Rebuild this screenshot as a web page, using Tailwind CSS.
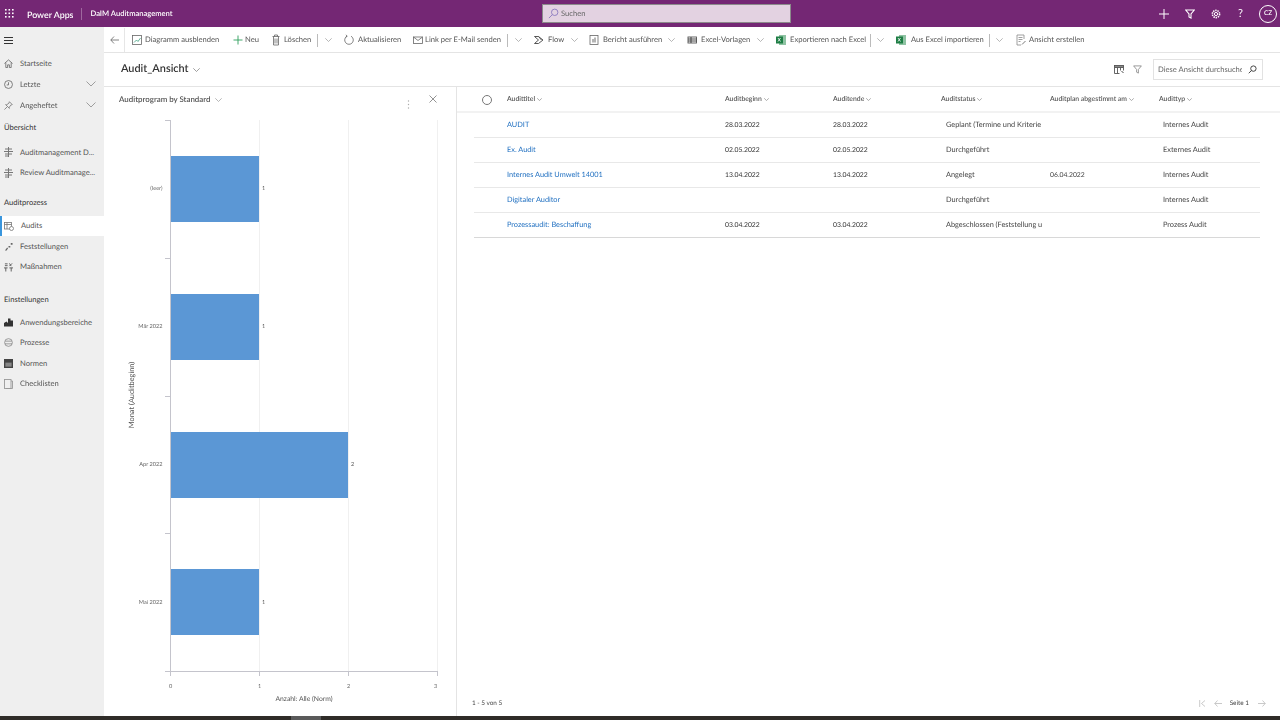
<!DOCTYPE html>
<html lang="de">
<head>
<meta charset="utf-8">
<title>Power Apps</title>
<script src="https://cdn.jsdelivr.net/npm/@tailwindcss/browser@4"></script>
</head>
<body class="m-0 overflow-hidden bg-white">
<div class="w-[1280px] h-[720px] flex flex-col overflow-hidden font-['Lato',sans-serif] [text-rendering:geometricPrecision] text-[7.600px] text-[#444] blur-[0.3px]">

<!-- top bar -->
<header class="h-[27px] shrink-0 bg-[#742774] text-white relative flex items-center">
  <svg class="shrink-0 ml-[5px] w-[9px] h-[9px]" viewBox="0 0 9 9" fill="#fff"><rect x="0" y="0" width="1.6" height="1.6"/><rect x="3.5" y="0" width="1.6" height="1.6"/><rect x="7" y="0" width="1.6" height="1.6"/><rect x="0" y="3.5" width="1.6" height="1.6"/><rect x="3.5" y="3.5" width="1.6" height="1.6"/><rect x="7" y="3.5" width="1.6" height="1.6"/><rect x="0" y="7" width="1.6" height="1.6"/><rect x="3.5" y="7" width="1.6" height="1.6"/><rect x="7" y="7" width="1.6" height="1.6"/></svg>
  <span class="ml-[13px] mt-[2px] text-[8.800px] font-semibold whitespace-nowrap">Power Apps</span>
  <span class="ml-[8px] w-px h-[12px] bg-white/30"></span>
  <span class="ml-[8px] mt-px text-[7.600px] font-semibold whitespace-nowrap w-[440px]">DaIM Auditmanagement</span>
  <div class="absolute left-[542px] top-[4px] w-[249px] h-[19px] bg-[#e3d2e1] border border-[#8b8b8b] flex items-center pl-[5px] gap-[2px] text-[#666]">
    <svg class="shrink-0 w-[11px] h-[11px]" viewBox="0 0 12 12" fill="none" stroke="#8c7bc0" stroke-width="1"><circle cx="7.3" cy="4.7" r="3.5"/><path d="M4.8 7.2 1 11"/></svg>
    <span class="mt-px">Suchen</span>
  </div>
  <div class="ml-auto flex items-center text-white">
    <svg class="shrink-0 w-[10px] h-[10px] mr-[16px]" viewBox="0 0 10 10" stroke="#fff" stroke-width="1"><path d="M5 0v10M0 5h10"/></svg>
    <svg class="shrink-0 w-[10px] h-[10px] mr-[16px]" viewBox="0 0 10 10" fill="none" stroke="#fff" stroke-width="1.1"><path d="M.7 1h8.6L6 5v4L4 8V5z"/></svg>
    <svg class="shrink-0 w-[10px] h-[10px] mr-[16px]" viewBox="0 0 10 10" fill="none" stroke="#fff" stroke-width="1"><circle cx="5" cy="5" r="1.6"/><circle cx="5" cy="5" r="3.6" stroke-width="1.6" stroke-dasharray="1.4 .85"/></svg>
    <span class="text-[11px] leading-none mr-[15px] w-[7px] text-center">?</span>
    <span class="w-[18px] h-[18px] mr-[3px] rounded-full border border-white flex items-center justify-center text-[6.5px] font-semibold">CZ</span>
  </div>
</header>

<div class="flex flex-1 min-h-0">
  <!-- sidebar -->
  <nav class="w-[104px] shrink-0 bg-[#efefef] flex flex-col text-[7.600px] text-[#555]">
    <div class="h-[26px] flex items-center pl-[4px]">
      <svg class="shrink-0 w-[9px] h-[7px]" viewBox="0 0 9 7" stroke="#333" stroke-width="1"><path d="M0 .5h9M0 3.500h9M0 6.500h9"/></svg>
    </div>
    <div class="h-[21px] flex items-center pl-[4px] gap-[7px]">
      <svg class="w-[9px] h-[9px] shrink-0" viewBox="0 0 10 10" fill="none" stroke="#666" stroke-width=".9"><path d="M.5 5 5 1l4.500 4M2 4v5.500h2V6.500h2v3h2V4"/></svg><span>Startseite</span>
    </div>
    <div class="h-[21px] flex items-center pl-[4px] gap-[7px] relative">
      <svg class="w-[9px] h-[9px] shrink-0" viewBox="0 0 10 10" fill="none" stroke="#666" stroke-width=".9"><circle cx="5" cy="5" r="4.400"/><path d="M5 2.500V5.500H3"/></svg><span>Letzte</span>
      <svg class="absolute left-[86px] top-[7px] w-[10px] h-[6px]" viewBox="0 0 10 6" fill="none" stroke="#888" stroke-width=".8"><path d="M.5.500 5 5 9.500.5"/></svg>
    </div>
    <div class="h-[21px] flex items-center pl-[4px] gap-[7px] relative">
      <svg class="w-[9px] h-[9px] shrink-0" viewBox="0 0 10 10" fill="none" stroke="#777" stroke-width=".9"><path d="M6 .8 9.200 4 7.500 4.600 5.800 7 6 8.200 1.800 4 3 4.200 5.400 2.500zM3.500 6.500.5 9.500"/></svg><span>Angeheftet</span>
      <svg class="absolute left-[86px] top-[7px] w-[10px] h-[6px]" viewBox="0 0 10 6" fill="none" stroke="#888" stroke-width=".8"><path d="M.5.500 5 5 9.500.5"/></svg>
    </div>
    <div class="h-[24px] flex items-center pl-[4px] text-[#333]">Übersicht</div>
    <div class="h-[20.500px] mt-[2px] flex items-center pl-[4px] gap-[7px]">
      <svg class="w-[9px] h-[10px] shrink-0" viewBox="0 0 9 10" stroke="#777" stroke-width="1" fill="none"><path d="M4.500 0v10M1 2h7M0 4.500h9M1 7h7M1 9h3"/></svg><span class="whitespace-nowrap">Auditmanagement D...</span>
    </div>
    <div class="h-[20.500px] flex items-center pl-[4px] gap-[7px]">
      <svg class="w-[9px] h-[10px] shrink-0" viewBox="0 0 9 10" stroke="#777" stroke-width="1" fill="none"><path d="M4.500 0v10M1 2h7M0 4.500h9M1 7h7M1 9h3"/></svg><span class="whitespace-nowrap">Review Auditmanage...</span>
    </div>
    <div class="h-[24px] mt-[8px] flex items-center pl-[4px] text-[#333]">Auditprozess</div>
    <div class="h-[20.500px] mt-[.5px] bg-white border-l-2 border-[#3a96dd] flex items-center pl-[2px] gap-[7px]">
      <svg class="w-[10px] h-[10px] shrink-0" viewBox="0 0 10 10" fill="none" stroke="#777" stroke-width=".8"><rect x=".5" y="1.500" width="7" height="6.500"/><path d="M.5 3.500h7M3 1.500v6.500"/><circle cx="7.500" cy="7.500" r="2" fill="#fff"/></svg><span>Audits</span>
    </div>
    <div class="h-[20.500px] flex items-center pl-[4px] gap-[7px]">
      <svg class="w-[9px] h-[9px] shrink-0" viewBox="0 0 10 10" fill="#666"><path d="M1 9.500 3.500 6l1 1L3 9.500zM5 4.500h2V6H5zM7.500 1h2v2h-2z"/></svg><span>Feststellungen</span>
    </div>
    <div class="h-[20.500px] flex items-center pl-[4px] gap-[7px]">
      <svg class="w-[9px] h-[10px] shrink-0" viewBox="0 0 10 10" fill="none" stroke="#555" stroke-width="1"><path d="M1 1.500h3M1 3.500h3M6 1 8 4M9 1 6 4M0 6h4M2 6v4M6 6h4M8 6v4"/></svg><span>Maßnahmen</span>
    </div>
    <div class="h-[24px] mt-[10.500px] flex items-center pl-[4px] text-[#333]">Einstellungen</div>
    <div class="h-[20.500px] mt-[.5px] flex items-center pl-[4px] gap-[7px]">
      <svg class="w-[9px] h-[10px] shrink-0" viewBox="0 0 9 10" fill="#333"><path d="M0 9.500V6l2.500-1.500L4 6V1.500h2.500v2H9v6z"/></svg><span>Anwendungsbereiche</span>
    </div>
    <div class="h-[20.500px] flex items-center pl-[4px] gap-[7px]">
      <svg class="w-[9px] h-[9px] shrink-0" viewBox="0 0 10 10" fill="none" stroke="#888" stroke-width=".9"><circle cx="5" cy="5" r="4.300"/><path d="M1.500 3.500h7M1 6.500h8"/></svg><span>Prozesse</span>
    </div>
    <div class="h-[20.500px] flex items-center pl-[4px] gap-[7px]">
      <svg class="w-[9px] h-[9px] shrink-0" viewBox="0 0 10 10"><rect width="10" height="10" fill="#444"/><rect x="1.500" y="4" width="7" height="4.500" fill="#888"/></svg><span>Normen</span>
    </div>
    <div class="h-[20.500px] flex items-center pl-[4px] gap-[7px]">
      <svg class="w-[9px] h-[10px] shrink-0" viewBox="0 0 9 10" fill="none" stroke="#999" stroke-width=".9"><rect x=".5" y=".5" width="6.500" height="9"/><path d="M7 2h1.500v7.500H2"/></svg><span>Checklisten</span>
    </div>
  </nav>

  <main class="flex-1 min-w-0 flex flex-col">
    <!-- command bar -->
    <div class="h-[26px] shrink-0 border-b border-[#e4e4e4] flex items-center whitespace-nowrap text-[#555] pt-px">
      <div class="w-[21px] h-full shrink-0 border-r border-[#e6e6e6] flex items-center justify-center">
        <svg class="shrink-0 w-[9px] h-[8px]" viewBox="0 0 9 8" fill="none" stroke="#666" stroke-width=".8"><path d="M9 4H.8M4 .5.800 4 4 7.500"/></svg>
      </div>
      <div class="w-[103px] shrink-0 flex items-center pl-[6px] gap-[2px]">
        <svg class="shrink-0 w-[12px] h-[12px]" viewBox="0 0 12 12" fill="none" stroke="#666" stroke-width=".8"><rect x="1.500" y="1.500" width="9" height="9"/><path d="M3 8.500 5.500 6 7 7.500 9.500 4" stroke="#3a9e7e"/></svg><span>Diagramm ausblenden</span>
      </div>
      <div class="w-[39px] shrink-0 flex items-center pl-[4px] gap-[1px]">
        <svg class="shrink-0 w-[12px] h-[12px]" viewBox="0 0 12 12" stroke="#2e9e5b" stroke-width=".9"><path d="M6 1.500v9M1.500 6h9"/></svg><span>Neu</span>
      </div>
      <div class="w-[50px] shrink-0 flex items-center pl-[3px] gap-[2px]">
        <svg class="shrink-0 w-[12px] h-[12px]" viewBox="0 0 12 12" fill="none" stroke="#666" stroke-width=".8"><path d="M2.500 2.500h7M4.500 2.500V1h3v1.500M3.500 2.500v8.500h5V2.500M5 4.500V9.500M7 4.500V9.500"/></svg><span>Löschen</span>
      </div>
      <span class="w-px h-[13px] shrink-0 bg-[#bbb]"></span>
      <div class="w-[20px] shrink-0 flex justify-center"><svg class="w-[7px] h-[4px]" viewBox="0 0 7 4" fill="none" stroke="#999" stroke-width=".7"><path d="M.3.300 3.500 3.500 6.700.3"/></svg></div>
      <div class="w-[73px] shrink-0 flex items-center pl-[5px] gap-[3px]">
        <svg class="shrink-0 w-[12px] h-[12px]" viewBox="0 0 12 12" fill="none" stroke="#666" stroke-width=".8"><path d="M4 2.200A4.300 4.300 0 1 0 8 2.200M3 .8 4.200 2.300 2.500 3.300"/></svg><span>Aktualisieren</span>
      </div>
      <div class="w-[96px] shrink-0 flex items-center pl-[1px] gap-[1px]">
        <svg class="shrink-0 w-[12px] h-[12px]" viewBox="0 0 12 12" fill="none" stroke="#666" stroke-width=".8"><rect x="1.500" y="3" width="9" height="6.500"/><path d="M1.500 3 6 6.500 10.500 3"/></svg><span>Link per E-Mail senden</span>
      </div>
      <span class="w-px h-[13px] shrink-0 bg-[#bbb]"></span>
      <div class="w-[20px] shrink-0 flex justify-center"><svg class="w-[7px] h-[4px]" viewBox="0 0 7 4" fill="none" stroke="#999" stroke-width=".7"><path d="M.3.300 3.500 3.500 6.700.3"/></svg></div>
      <div class="w-[38px] shrink-0 flex items-center pl-[5px] gap-[3px]">
        <svg class="shrink-0 w-[12px] h-[12px]" viewBox="0 0 12 12" fill="none" stroke="#444" stroke-width=".9"><path d="M1.500 2.500h4L10 6 5.500 9.500h-4L5.500 6zM5.500 2.500 8.500 6"/></svg><span>Flow</span>
      </div>
      <div class="w-[17px] shrink-0 flex justify-center"><svg class="w-[7px] h-[4px]" viewBox="0 0 7 4" fill="none" stroke="#999" stroke-width=".7"><path d="M.3.300 3.500 3.500 6.700.3"/></svg></div>
      <div class="w-[80px] shrink-0 flex items-center pl-[5px] gap-[3px]">
        <svg class="shrink-0 w-[12px] h-[12px]" viewBox="0 0 12 12" fill="none" stroke="#666" stroke-width=".8"><rect x="2" y="1.500" width="8" height="9"/><path d="M5 8.500V5M7 8.500V3.500" stroke="#444"/></svg><span>Bericht ausführen</span>
      </div>
      <div class="w-[16px] shrink-0 flex justify-center"><svg class="w-[7px] h-[4px]" viewBox="0 0 7 4" fill="none" stroke="#999" stroke-width=".7"><path d="M.3.300 3.500 3.500 6.700.3"/></svg></div>
      <div class="w-[73px] shrink-0 flex items-center pl-[7px] gap-[3px]">
        <svg class="shrink-0 w-[12px] h-[12px]" viewBox="0 0 12 12" fill="none" stroke="#555" stroke-width=".9"><rect x="2" y="3" width="8.500" height="6"/><path d="M2 5h8.500M2 7h8.500M5 3v6" stroke="#333"/></svg><span>Excel-Vorlagen</span>
      </div>
      <div class="w-[16px] shrink-0 flex justify-center"><svg class="w-[7px] h-[4px]" viewBox="0 0 7 4" fill="none" stroke="#999" stroke-width=".7"><path d="M.3.300 3.500 3.500 6.700.3"/></svg></div>
      <div class="w-[102px] shrink-0 flex items-center pl-[7px] gap-[3px]">
        <svg class="shrink-0 w-[12px] h-[12px]" viewBox="0 0 12 12"><rect x="4" y="1" width="7" height="10" fill="#8fc3a3"/><rect x="1" y="2.500" width="7" height="7" fill="#1e7e45"/><path d="M3 4l2.500 3.500M5.500 4 3 7.500" stroke="#fff" stroke-width=".8"/></svg><span>Exportieren nach Excel</span>
      </div>
      <span class="w-px h-[13px] shrink-0 bg-[#bbb]"></span>
      <div class="w-[19px] shrink-0 flex justify-center"><svg class="w-[7px] h-[4px]" viewBox="0 0 7 4" fill="none" stroke="#999" stroke-width=".7"><path d="M.3.300 3.500 3.500 6.700.3"/></svg></div>
      <div class="w-[99px] shrink-0 flex items-center pl-[5px] gap-[4px]">
        <svg class="shrink-0 w-[12px] h-[12px]" viewBox="0 0 12 12"><rect x="4" y="1" width="7" height="10" fill="#8fc3a3"/><rect x="1" y="2.500" width="7" height="7" fill="#1e7e45"/><path d="M3 4l2.500 3.500M5.500 4 3 7.500" stroke="#fff" stroke-width=".8"/></svg><span>Aus Excel importieren</span>
      </div>
      <span class="w-px h-[13px] shrink-0 bg-[#bbb]"></span>
      <div class="w-[19px] shrink-0 flex justify-center"><svg class="w-[7px] h-[4px]" viewBox="0 0 7 4" fill="none" stroke="#999" stroke-width=".7"><path d="M.3.300 3.500 3.500 6.700.3"/></svg></div>
      <div class="flex items-center pl-[6px] gap-[2px]">
        <svg class="shrink-0 w-[12px] h-[12px]" viewBox="0 0 12 12" fill="none" stroke="#888" stroke-width=".8"><path d="M9 5V1H2v10h4M3.500 3.500h4M3.500 5.500h4M3.500 7.500h2"/><path d="M7 10.500 10.500 7" stroke="#555"/></svg><span>Ansicht erstellen</span>
      </div>
    </div>

    <!-- view header -->
    <div class="h-[34px] shrink-0 border-b border-[#e4e4e4] flex items-center pl-[17px] relative">
      <span class="text-[10.900px] font-semibold text-[#333]">Audit_Ansicht</span>
      <svg class="shrink-0 ml-[4px] w-[7px] h-[4px]" viewBox="0 0 7 4" fill="none" stroke="#777" stroke-width=".7"><path d="M.3.300 3.500 3.500 6.700.3"/></svg>
      <svg class="shrink-0 ml-auto w-[10px] h-[9px]" viewBox="0 0 10 9" fill="none" stroke="#555" stroke-width=".9"><rect x=".5" y=".5" width="9" height="2" fill="#888"/><path d="M.5 2.500v6h5M3.500 2.500v6M6.500 2.500v3M9.500 2.500v3"/><path d="M7.500 6 9.500 8" stroke="#333"/></svg>
      <svg class="shrink-0 ml-[9px] w-[9px] h-[9px]" viewBox="0 0 10 10" fill="none" stroke="#777" stroke-width=".8"><path d="M.7 1h8.600L6 5v4L4 8V5z"/></svg>
      <div class="ml-[11px] mr-[17px] w-[110px] h-[21px] shrink-0 border border-[#e2e2e2] flex items-center pl-[4px] relative overflow-hidden whitespace-nowrap text-[#666]">
        <span>Diese Ansicht durchsuche</span>
        <span class="absolute right-0 top-0 bottom-0 w-[20px] bg-white flex items-center justify-center">
          <svg class="shrink-0 w-[9px] h-[9px]" viewBox="0 0 10 10" fill="none" stroke="#333" stroke-width="1"><circle cx="6" cy="4" r="3"/><path d="M3.800 6.200.8 9.200"/></svg>
        </span>
      </div>
    </div>

    <div class="flex-1 min-h-0 flex">
      <!-- chart panel -->
      <section class="w-[353px] shrink-0 border-r border-[#e4e4e4] relative">
        <div class="h-[25px] flex items-center pl-[15px]">
          <span class="text-[7.900px] font-semibold text-[#555]">Auditprogram by Standard</span>
          <svg class="shrink-0 ml-[4px] w-[7px] h-[4px]" viewBox="0 0 7 4" fill="none" stroke="#999" stroke-width=".7"><path d="M.3.300 3.500 3.500 6.700.3"/></svg>
        </div>
        <svg class="absolute left-[303px] top-[13px] w-[3px] h-[9px]" viewBox="0 0 3 9" fill="#aaa"><circle cx="1.500" cy="1" r=".7"/><circle cx="1.500" cy="4.500" r=".7"/><circle cx="1.500" cy="8" r=".7"/></svg>
        <svg class="absolute left-[325px] top-[8px] w-[8px] h-[8px]" viewBox="0 0 8 8" stroke="#777" stroke-width=".8"><path d="M.5.500l7 7M7.500.500l-7 7"/></svg>
        <svg class="absolute left-0 top-0" width="352" height="629" viewBox="104 87 352 629" font-family="Lato,sans-serif">
          <g stroke="#f0f0f0" stroke-width="1">
            <path d="M259.500 120V671M348.500 120V671M437.500 120V671"/>
          </g>
          <g fill="#5b97d5">
            <rect x="171" y="156" width="88" height="66"/>
            <rect x="171" y="294" width="88" height="66"/>
            <rect x="171" y="432" width="177" height="66"/>
            <rect x="171" y="569" width="88" height="66"/>
          </g>
          <g stroke="#c4c4cc" stroke-width="1" fill="none">
            <path d="M170.500 120V671M165 671.500H437.500"/>
            <path d="M165 120.500h5M165 258.500h5M165 396.500h5M165 533.500h5"/>
            <path d="M170.500 671v5M259.500 671v5M348.500 671v5M437.500 671v5"/>
          </g>
          <g font-size="5.600" fill="#666" text-anchor="end">
            <text x="162.500" y="190">(leer)</text>
            <text x="162.500" y="328">Mär 2022</text>
            <text x="162.500" y="466">Apr 2022</text>
            <text x="162.500" y="604">Mai 2022</text>
          </g>
          <g font-size="5.600" fill="#555">
            <text x="262" y="190">1</text>
            <text x="262" y="328">1</text>
            <text x="351" y="466">2</text>
            <text x="262" y="604">1</text>
          </g>
          <g font-size="5.600" fill="#666" text-anchor="middle">
            <text x="170.500" y="688">0</text>
            <text x="259.500" y="688">1</text>
            <text x="348.500" y="688">2</text>
            <text x="435.500" y="688">3</text>
          </g>
          <text x="304" y="701" font-size="6.800" fill="#555" text-anchor="middle">Anzahl: Alle (Norm)</text>
          <text transform="translate(134 395) rotate(-90)" font-size="7.400" fill="#555" text-anchor="middle">Monat (Auditbeginn)</text>
        </svg>
      </section>

      <!-- table -->
      <section class="flex-1 min-w-0 flex flex-col relative text-[7.350px]">
        <div class="h-[26px] shrink-0 border-b-2 border-[#f2f2f2] pl-[17px] pt-px grid grid-cols-[33px_218px_108px_108px_109px_109px_101px] items-center text-[6.800px] font-semibold text-[#555] whitespace-nowrap">
          <span class="ml-[8px] w-[10px] h-[10px] rounded-full border border-[#777]"></span>
          <span class="flex items-center gap-[2px]">Audittitel<svg class="shrink-0 w-[5px] h-[3px]" viewBox="0 0 7 4" fill="none" stroke="#888"><path d="M.3.300 3.500 3.500 6.700.3"/></svg></span>
          <span class="flex items-center gap-[2px]">Auditbeginn<svg class="shrink-0 w-[5px] h-[3px]" viewBox="0 0 7 4" fill="none" stroke="#888"><path d="M.3.300 3.500 3.500 6.700.3"/></svg></span>
          <span class="flex items-center gap-[2px]">Auditende<svg class="shrink-0 w-[5px] h-[3px]" viewBox="0 0 7 4" fill="none" stroke="#888"><path d="M.3.300 3.500 3.500 6.700.3"/></svg></span>
          <span class="flex items-center gap-[2px]">Auditstatus<svg class="shrink-0 w-[5px] h-[3px]" viewBox="0 0 7 4" fill="none" stroke="#888"><path d="M.3.300 3.500 3.500 6.700.3"/></svg></span>
          <span class="flex items-center gap-[2px]">Auditplan abgestimmt am<svg class="shrink-0 w-[5px] h-[3px]" viewBox="0 0 7 4" fill="none" stroke="#888"><path d="M.3.300 3.500 3.500 6.700.3"/></svg></span>
          <span class="flex items-center gap-[2px]">Audittyp<svg class="shrink-0 w-[5px] h-[3px]" viewBox="0 0 7 4" fill="none" stroke="#888"><path d="M.3.300 3.500 3.500 6.700.3"/></svg></span>
        </div>
        <div class="ml-[17px] w-[786px] h-[25px] shrink-0 border-b border-[#e8e8e8] grid grid-cols-[33px_218px_108px_108px_109px_109px_101px] items-center whitespace-nowrap">
          <span></span><a class="text-[#1f6fc0]">AUDIT</a><span class="text-[6.800px] text-[#333]">28.03.2022</span><span class="text-[6.800px] text-[#333]">28.03.2022</span><span class="pl-[5px] overflow-hidden w-[102px]">Geplant (Termine und Kriterie</span><span></span><span class="pl-[4px]">Internes Audit</span>
        </div>
        <div class="ml-[17px] w-[786px] h-[25px] shrink-0 border-b border-[#e8e8e8] grid grid-cols-[33px_218px_108px_108px_109px_109px_101px] items-center whitespace-nowrap">
          <span></span><a class="text-[#1f6fc0]">Ex. Audit</a><span class="text-[6.800px] text-[#333]">02.05.2022</span><span class="text-[6.800px] text-[#333]">02.05.2022</span><span class="pl-[5px] overflow-hidden w-[102px]">Durchgeführt</span><span></span><span class="pl-[4px]">Externes Audit</span>
        </div>
        <div class="ml-[17px] w-[786px] h-[25px] shrink-0 border-b border-[#e8e8e8] grid grid-cols-[33px_218px_108px_108px_109px_109px_101px] items-center whitespace-nowrap">
          <span></span><a class="text-[#1f6fc0]">Internes Audit Umwelt 14001</a><span class="text-[6.800px] text-[#333]">13.04.2022</span><span class="text-[6.800px] text-[#333]">13.04.2022</span><span class="pl-[5px] overflow-hidden w-[102px]">Angelegt</span><span class="text-[6.800px]">06.04.2022</span><span class="pl-[4px]">Internes Audit</span>
        </div>
        <div class="ml-[17px] w-[786px] h-[25px] shrink-0 border-b border-[#e8e8e8] grid grid-cols-[33px_218px_108px_108px_109px_109px_101px] items-center whitespace-nowrap">
          <span></span><a class="text-[#1f6fc0]">Digitaler Auditor</a><span></span><span></span><span class="pl-[5px] overflow-hidden w-[102px]">Durchgeführt</span><span></span><span class="pl-[4px]">Internes Audit</span>
        </div>
        <div class="ml-[17px] w-[786px] h-[25px] shrink-0 border-b border-[#d8d8d8] grid grid-cols-[33px_218px_108px_108px_109px_109px_101px] items-center whitespace-nowrap">
          <span></span><a class="text-[#1f6fc0]">Prozessaudit: Beschaffung</a><span class="text-[6.800px] text-[#333]">03.04.2022</span><span class="text-[6.800px] text-[#333]">03.04.2022</span><span class="pl-[5px] overflow-hidden w-[102px]">Abgeschlossen (Feststellung u</span><span></span><span class="pl-[4px]">Prozess Audit</span>
        </div>
        <div class="mt-auto h-[24px] shrink-0 flex items-center pl-[15px] text-[6.400px] text-[#444]">
          <span>1 - 5 von 5</span>
          <div class="ml-auto mr-[14px] flex items-center">
            <svg class="shrink-0 w-[7px] h-[7px] mr-[8px]" viewBox="0 0 7 7" fill="none" stroke="#bbb" stroke-width=".8"><path d="M.7 0v7M6 .5 2.500 3.500 6 6.500"/></svg>
            <svg class="shrink-0 w-[8px] h-[7px] mr-[8px]" viewBox="0 0 8 7" fill="none" stroke="#bbb" stroke-width=".8"><path d="M8 3.500H.8M3.500.5.800 3.500 3.500 6.500"/></svg>
            <span class="mr-[9px]">Seite 1</span>
            <svg class="shrink-0 w-[8px] h-[7px]" viewBox="0 0 8 7" fill="none" stroke="#bbb" stroke-width=".8"><path d="M0 3.500h7.200M4.500.5l2.700 3-2.700 3"/></svg>
          </div>
        </div>
      </section>
    </div>
  </main>
</div>

<!-- bottom strip -->
<div class="h-[4px] shrink-0 bg-[#2f2c28] flex">
  <span class="ml-[291px] w-[30px] bg-[#5a5a5a]"></span>
</div>
</div>
</body>
</html>
